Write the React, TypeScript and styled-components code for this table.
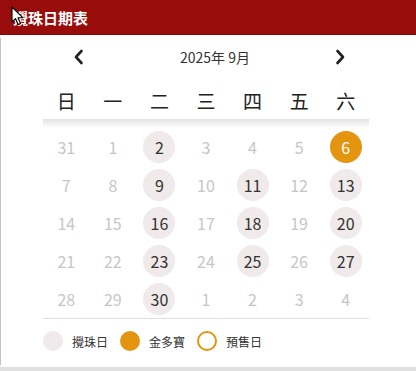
import React, { useState } from "react";
import styled, { createGlobalStyle, css } from "styled-components";

type DayKind = "none" | "draw" | "jackpot" | "presale";

interface Day {
  n: number;
  kind: DayKind;
}

const WEEKDAYS = ["日", "一", "二", "三", "四", "五", "六"];

const DRAW_DAYS = [2, 9, 11, 13, 16, 18, 20, 23, 25, 27, 30];
const JACKPOT_DAYS = [6];

const buildDays = (): Day[] => {
  const days: Day[] = [{ n: 31, kind: "none" }];
  for (let i = 1; i <= 30; i++) {
    let kind: DayKind = "none";
    if (JACKPOT_DAYS.includes(i)) kind = "jackpot";
    else if (DRAW_DAYS.includes(i)) kind = "draw";
    days.push({ n: i, kind });
  }
  for (let i = 1; i <= 4; i++) days.push({ n: i, kind: "none" });
  return days;
};

const App = () => {
  const [month] = useState("2025年 9月");
  const days = buildDays();

  return (
    <>
      <GlobalStyle />
      <Page>
        <Header>
          <HeaderTitle>攪珠日期表</HeaderTitle>
        </Header>
        <Cursor width="13" height="20" viewBox="0 0 13 20">
          <path
            d="M1 1 L1 16 L4.5 12.6 L7.2 18.6 L9.6 17.5 L7 11.7 L11.8 11.7 Z"
            fill="#fff"
            stroke="#000"
            strokeWidth="1.1"
            strokeLinejoin="round"
          />
        </Cursor>
        <Panel>
          <Nav>
            <NavButton aria-label="上個月">
              <svg width="12" height="16" viewBox="0 0 12 16">
                <path
                  d="M8.5 2 L3 8 L8.5 14"
                  fill="none"
                  stroke="#222"
                  strokeWidth="2.6"
                  strokeLinecap="round"
                  strokeLinejoin="round"
                />
              </svg>
            </NavButton>
            <MonthTitle>{month}</MonthTitle>
            <NavButton aria-label="下個月">
              <svg width="12" height="16" viewBox="0 0 12 16">
                <path
                  d="M3.5 2 L9 8 L3.5 14"
                  fill="none"
                  stroke="#222"
                  strokeWidth="2.6"
                  strokeLinecap="round"
                  strokeLinejoin="round"
                />
              </svg>
            </NavButton>
          </Nav>
          <WeekRow>
            {WEEKDAYS.map((w) => (
              <WeekCell key={w}>{w}</WeekCell>
            ))}
          </WeekRow>
          <Shade />
          <DayGrid>
            {days.map((d, i) => (
              <DayCell key={i}>
                <DayCircle kind={d.kind}>{d.n}</DayCircle>
              </DayCell>
            ))}
          </DayGrid>
          <Legend>
            <LegendItem>
              <LegendDot kind="draw" />
              <LegendText>攪珠日</LegendText>
            </LegendItem>
            <LegendItem>
              <LegendDot kind="jackpot" />
              <LegendText>金多寶</LegendText>
            </LegendItem>
            <LegendItem>
              <LegendDot kind="presale" />
              <LegendText>預售日</LegendText>
            </LegendItem>
          </Legend>
        </Panel>
        <BottomStrip />
      </Page>
    </>
  );
};

export default App;

const GlobalStyle = createGlobalStyle`
  html, body {
    margin: 0;
    padding: 0;
    background: #fff;
  }
  body {
    font-family: "Noto Sans CJK TC", "Noto Sans", sans-serif;
  }
`;

const Page = styled.div`
  position: relative;
  width: 416px;
  height: 371px;
  overflow: hidden;
`;

const Header = styled.div`
  display: flex;
  align-items: center;
  height: 34px;
  background: #990c0c;
  box-shadow: 0 1px 0 #7d0909;
`;

const HeaderTitle = styled.h1`
  margin: 0;
  padding-left: 13px;
  font-size: 15px;
  font-weight: 700;
  color: #fff;
  letter-spacing: 0;
`;

const Cursor = styled.svg`
  position: absolute;
  left: 11px;
  top: 6px;
`;

const Panel = styled.div`
  margin-top: 4px;
  padding: 0 0 2px 42px;
  border-left: 1px solid #c4c4c4;
  width: 326px;
`;

const Nav = styled.div`
  display: flex;
  align-items: center;
  height: 38px;
  padding: 0 17px 0 24px;
`;

const NavButton = styled.button`
  display: flex;
  align-items: center;
  justify-content: center;
  width: 24px;
  height: 24px;
  padding: 0;
  border: none;
  background: none;
  cursor: pointer;
`;

const MonthTitle = styled.div`
  flex: 1;
  padding-left: 11px;
  text-align: center;
  font-size: 14px;
  color: #333;
`;

const WeekRow = styled.div`
  display: grid;
  grid-template-columns: repeat(7, 1fr);
  margin-top: 5px;
  height: 38px;
`;

const WeekCell = styled.div`
  display: flex;
  align-items: center;
  justify-content: center;
  font-size: 19px;
  color: #222;
`;

const Shade = styled.div`
  height: 9px;
  background: linear-gradient(#e3e3e3, #fff);
`;

const DayGrid = styled.div`
  display: grid;
  grid-template-columns: repeat(7, 1fr);
  grid-auto-rows: 38px;
  border-bottom: 1px solid #dedede;
`;

const DayCell = styled.div`
  display: flex;
  align-items: center;
  justify-content: center;
`;

const DayCircle = styled.div<{ kind: DayKind }>`
  display: flex;
  align-items: center;
  justify-content: center;
  width: 32px;
  height: 32px;
  border-radius: 50%;
  box-sizing: border-box;
  font-size: 16px;
  color: #c6c6c6;

  ${({ kind }) => {
    if (kind === "draw") {
      return css`
        background: #f0eaea;
        color: #333;
      `;
    }
    if (kind === "jackpot") {
      return css`
        background: #e4950f;
        color: #fff;
      `;
    }
    if (kind === "presale") {
      return css`
        border: 2px solid #e4950f;
        color: #333;
      `;
    }
  }}
`;

const Legend = styled.div`
  display: flex;
  align-items: center;
  height: 44px;
  gap: 12px;
`;

const LegendItem = styled.div`
  display: flex;
  align-items: center;
  gap: 9px;
`;

const LegendDot = styled.span<{ kind: DayKind }>`
  display: block;
  width: 20px;
  height: 20px;
  border-radius: 50%;
  box-sizing: border-box;
  background: ${({ kind }) =>
    kind === "draw" ? "#f0eaea" : kind === "jackpot" ? "#e4950f" : "#fff"};
  border: ${({ kind }) => (kind === "presale" ? "2px solid #e4950f" : "none")};
`;

const LegendText = styled.span`
  font-size: 12px;
  color: #333;
`;

const BottomStrip = styled.div`
  margin-top: 2px;
  height: 4px;
  background: #e0e0e0;
`;
